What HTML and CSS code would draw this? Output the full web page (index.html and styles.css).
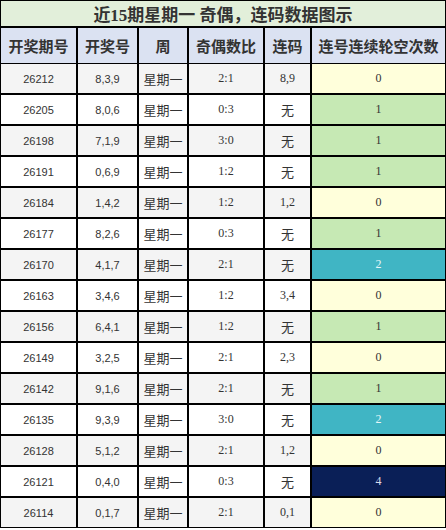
FILE: index.html
```html
<!DOCTYPE html>
<html lang="zh-CN">
<head>
<meta charset="UTF-8" />
<meta name="viewport" content="width=device-width, initial-scale=1.0"/>
<title>近15期星期一 奇偶，连码数据图示</title>
<link rel="stylesheet" href="styles.css">
</head>
<body>
<table class="stats">
    <colgroup>
        <col style="width:76px">
        <col style="width:61px">
        <col style="width:50px">
        <col style="width:76px">
        <col style="width:47px">
        <col>
    </colgroup>
    <thead>
        <tr class="title-row">
            <th colspan="6">近15期星期一 奇偶，连码数据图示</th>
        </tr>
        <tr class="head-row">
            <th>开奖期号</th>
            <th>开奖号</th>
            <th>周</th>
            <th>奇偶数比</th>
            <th>连码</th>
            <th>连号连续轮空次数</th>
        </tr>
    </thead>
    <tbody>
        <tr><td class="num">26212</td><td class="num">8,3,9</td><td class="cn">星期一</td><td>2:1</td><td>8,9</td><td class="miss m0">0</td></tr>
        <tr><td class="num">26205</td><td class="num">8,0,6</td><td class="cn">星期一</td><td>0:3</td><td class="cn">无</td><td class="miss m1">1</td></tr>
        <tr><td class="num">26198</td><td class="num">7,1,9</td><td class="cn">星期一</td><td>3:0</td><td class="cn">无</td><td class="miss m1">1</td></tr>
        <tr><td class="num">26191</td><td class="num">0,6,9</td><td class="cn">星期一</td><td>1:2</td><td class="cn">无</td><td class="miss m1">1</td></tr>
        <tr><td class="num">26184</td><td class="num">1,4,2</td><td class="cn">星期一</td><td>1:2</td><td>1,2</td><td class="miss m0">0</td></tr>
        <tr><td class="num">26177</td><td class="num">8,2,6</td><td class="cn">星期一</td><td>0:3</td><td class="cn">无</td><td class="miss m1">1</td></tr>
        <tr><td class="num">26170</td><td class="num">4,1,7</td><td class="cn">星期一</td><td>2:1</td><td class="cn">无</td><td class="miss m2">2</td></tr>
        <tr><td class="num">26163</td><td class="num">3,4,6</td><td class="cn">星期一</td><td>1:2</td><td>3,4</td><td class="miss m0">0</td></tr>
        <tr><td class="num">26156</td><td class="num">6,4,1</td><td class="cn">星期一</td><td>1:2</td><td class="cn">无</td><td class="miss m1">1</td></tr>
        <tr><td class="num">26149</td><td class="num">3,2,5</td><td class="cn">星期一</td><td>2:1</td><td>2,3</td><td class="miss m0">0</td></tr>
        <tr><td class="num">26142</td><td class="num">9,1,6</td><td class="cn">星期一</td><td>2:1</td><td class="cn">无</td><td class="miss m1">1</td></tr>
        <tr><td class="num">26135</td><td class="num">9,3,9</td><td class="cn">星期一</td><td>3:0</td><td class="cn">无</td><td class="miss m2">2</td></tr>
        <tr><td class="num">26128</td><td class="num">5,1,2</td><td class="cn">星期一</td><td>2:1</td><td>1,2</td><td class="miss m0">0</td></tr>
        <tr><td class="num">26121</td><td class="num">0,4,0</td><td class="cn">星期一</td><td>0:3</td><td class="cn">无</td><td class="miss m4">4</td></tr>
        <tr><td class="num">26114</td><td class="num">0,1,7</td><td class="cn">星期一</td><td>2:1</td><td>0,1</td><td class="miss m0">0</td></tr>
    </tbody>
</table>
</body>
</html>
```
FILE: styles.css
```css
body, html {
    margin: 0;
    padding: 0;
    background: #fff;
}

.stats {
    width: 446px;
    table-layout: fixed;
    border-collapse: separate;
    border-spacing: 0;
    border-left: 1px solid #000;
    border-top: 1px solid #000;
    font-family: "Liberation Serif", "Noto Sans CJK SC", serif;
    font-size: 12px;
    color: #333;
}

.stats th, .stats td {
    border-right: 1px solid #000;
    border-bottom: 1px solid #000;
    border-left: 1px solid #000;
    border-top: 1px solid #000;
    text-align: center;
    padding: 0;
}

.stats tr > :first-child {
    border-left: none;
}

.stats tr:first-child > * {
    border-top: none;
}

/* Title bar */
.title-row th {
    height: 25px;
    background: #e2efda;
    font-family: "Liberation Serif", "Noto Sans CJK SC", serif;
    font-size: 17px;
    font-weight: bold;
    color: #333;
}

.head-row th {
    height: 35px;
    background: #dbe2f2;
    font-family: "Noto Sans CJK SC", sans-serif;
    font-size: 15px;
    font-weight: bold;
    color: #333;
}

.stats tbody td {
    height: 29px;
    background: #fff;
}

.stats tbody tr:nth-child(odd) td {
    background: #f4f4f4;
}

.stats td.num {
    font-family: "Liberation Sans", sans-serif;
    font-size: 11px;
}

.stats td.cn {
    font-family: "Noto Sans CJK SC", sans-serif;
    font-size: 13px;
}

/* Miss count colours */
.stats tbody tr td.m0 { background: #ffffdb; }
.stats tbody tr td.m1 { background: #c6e9b4; }
.stats tbody tr td.m2 { background: #40b5c4; color: #e8f6f8; }
.stats tbody tr td.m4 { background: #0a1f57; color: #d8dcea; }
```
